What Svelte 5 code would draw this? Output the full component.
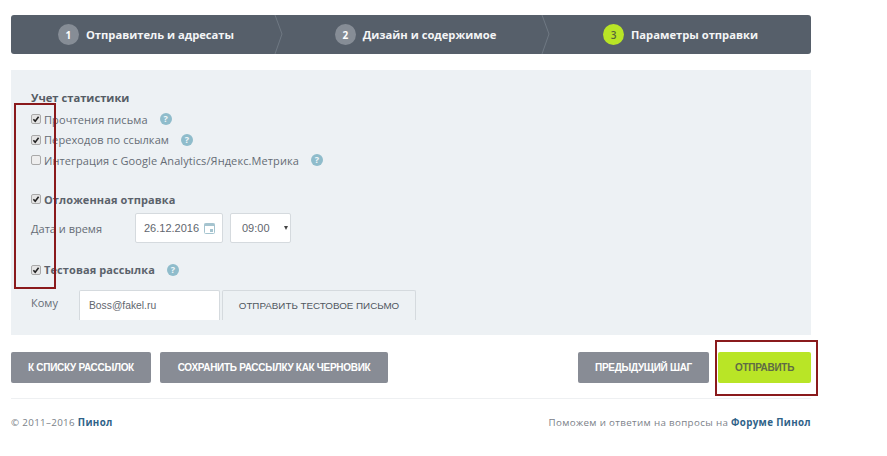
<script>
  const steps = [
    { n: 1, label: "Отправитель и адресаты" },
    { n: 2, label: "Дизайн и содержимое" },
    { n: 3, label: "Параметры отправки", active: true },
  ];
  const stats = [
    { label: "Прочтения письма", checked: true },
    { label: "Переходов по ссылкам", checked: true },
    { label: "Интеграция с Google Analytics/Яндекс.Метрика", checked: false },
  ];
</script>

{#snippet check(checked)}
  <svg class="check" width="10" height="10" viewBox="0 0 10 10">
    <rect x="0.5" y="0.5" width="9" height="9" rx="1.5" fill={checked ? "#e4e4e4" : "#eeeeee"} stroke="#a9a9a9" />
    {#if checked}
      <path d="M2.4 5.2 L4.2 7.2 L7.6 2.8" fill="none" stroke="#222" stroke-width="1.6" />
    {/if}
  </svg>
{/snippet}

{#snippet help()}
  <span class="help">?</span>
{/snippet}

<div class="page">
  <div class="steps">
    {#each steps as s, i}
      <div class="step">
        <span class="num" class:on={s.active}>{s.n}</span>
        <span class="step-label">{s.label}</span>
        {#if i < 2}
          <svg class="chev" width="10" height="39" viewBox="0 0 10 39">
            <path d="M1 0 L8 19 L1 39" fill="none" stroke="#6f7883" stroke-width="1" />
          </svg>
        {/if}
      </div>
    {/each}
  </div>

  <div class="panel">
    <h4>Учет статистики</h4>
    {#each stats as r}
      <label class="row">
        {@render check(r.checked)}
        <span>{r.label}</span>
        {@render help()}
      </label>
    {/each}

    <label class="row strong first">
      {@render check(true)}
      <span>Отложенная отправка</span>
    </label>
    <div class="date-row">
      <span class="field-name">Дата и время</span>
      <div class="input date">
        <span>26.12.2016</span>
        <svg width="11" height="12" viewBox="0 0 11 12">
          <rect x="0.5" y="1.5" width="10" height="10" rx="1" fill="none" stroke="#a5c4cf" />
          <rect x="0.5" y="1.5" width="10" height="2.5" fill="#a5c4cf" />
          <rect x="6" y="7" width="3" height="3" fill="#a5c4cf" />
        </svg>
      </div>
      <div class="input time">
        <span>09:00</span>
        <span class="caret"></span>
      </div>
    </div>

    <label class="row strong test">
      {@render check(true)}
      <span>Тестовая рассылка</span>
      {@render help()}
    </label>
    <div class="to-row">
      <span class="field-name to">Кому</span>
      <div class="input email">Boss@fakel.ru</div>
      <div class="send-test">ОТПРАВИТЬ ТЕСТОВОЕ ПИСЬМО</div>
    </div>
  </div>

  <div class="actions">
    <button class="btn list">К СПИСКУ РАССЫЛОК</button>
    <button class="btn draft">СОХРАНИТЬ РАССЫЛКУ КАК ЧЕРНОВИК</button>
    <span class="spacer"></span>
    <button class="btn prev">ПРЕДЫДУЩИЙ ШАГ</button>
    <button class="btn go">ОТПРАВИТЬ</button>
  </div>

  <footer>
    <span>© 2011–2016 <a href="#top">Пинол</a></span>
    <span class="ask">Поможем и ответим на вопросы на <a href="#top">Форуме Пинол</a></span>
  </footer>
</div>

<div class="mark left"></div>
<div class="mark right"></div>

<style>
  :global(body) {
    background: #fff;
  }

  .page {
    width: 800px;
    margin-left: 11px;
    padding-top: 15px;
    font-family: "Open Sans", sans-serif;
    color: #656c75;
  }

  .steps {
    display: grid;
    grid-template-columns: 267px 267px 266px;
    height: 39px;
    background: #565f6a;
    border-radius: 3px;
  }

  .step {
    position: relative;
    display: flex;
    align-items: center;
    justify-content: center;
    gap: 7px;
    padding-left: 3px;
    color: #f4f5f6;
    font-size: 11.2px;
    font-weight: 700;
  }

  .step:nth-child(2) {
    padding-left: 8px;
  }

  .step:nth-child(3) {
    padding-left: 5px;
  }

  .num {
    width: 21px;
    height: 21px;
    border-radius: 50%;
    background: #868d96;
    color: #fff;
    font-size: 10px;
    display: flex;
    align-items: center;
    justify-content: center;
  }

  .num.on {
    background: #b9e526;
    color: #56643a;
    font-weight: 600;
  }

  .chev {
    position: absolute;
    right: -6px;
    top: 0;
  }

  .panel {
    margin-top: 16px;
    height: 265px;
    box-sizing: border-box;
    background: #edf1f4;
    padding: 20px 20px 0;
    font-size: 11px;
  }

  h4 {
    margin: 0 0 3px;
    font-size: 11.2px;
    line-height: 16px;
    font-weight: 700;
    color: #555c65;
  }

  .row {
    display: flex;
    align-items: center;
    height: 20.5px;
    gap: 3px;
    letter-spacing: 0.1px;
  }

  .check {
    flex: none;
  }

  .help {
    width: 12px;
    height: 12px;
    margin-left: 9px;
    border-radius: 50%;
    background: #8fbccb;
    color: #f2f7f9;
    font-size: 9px;
    font-weight: 700;
    line-height: 12px;
    text-align: center;
  }

  .strong {
    font-weight: 700;
    color: #5b626b;
  }

  .first {
    margin-top: 18.5px;
  }

  .date-row {
    display: flex;
    align-items: center;
    margin-top: 3px;
    height: 30px;
  }

  .field-name {
    width: 104px;
    padding-top: 1px;
  }

  .input {
    box-sizing: border-box;
    background: #fff;
    border: 1px solid #d5dade;
    border-radius: 2px;
    font-family: "Liberation Sans", sans-serif;
    font-size: 11px;
    color: #5f666e;
    display: flex;
    align-items: center;
  }

  .date {
    width: 88px;
    height: 30px;
    padding-left: 8px;
    gap: 5px;
  }

  .time {
    width: 61px;
    height: 30px;
    margin-left: 7px;
    padding-left: 11px;
    gap: 14px;
  }

  .caret {
    width: 0;
    height: 0;
    border-left: 2px solid transparent;
    border-right: 2px solid transparent;
    border-top: 4px solid #444;
  }

  .test {
    margin-top: 16.75px;
  }

  .to-row {
    display: flex;
    align-items: flex-start;
    margin-top: 9.75px;
    height: 30px;
  }

  .to {
    width: 48px;
    line-height: 26px;
    padding-top: 0;
  }

  .email {
    width: 141px;
    height: 30px;
    padding-left: 9px;
    border-bottom: 0;
    border-radius: 2px 2px 0 0;
    font-size: 10.3px;
  }

  .send-test {
    box-sizing: border-box;
    width: 194px;
    height: 30px;
    margin-left: 2px;
    border: 1px solid #d5dade;
    border-bottom: 0;
    border-radius: 2px 2px 0 0;
    font-family: "Liberation Sans", sans-serif;
    font-size: 9.8px;
    color: #50575f;
    display: flex;
    align-items: center;
    justify-content: center;
  }

  .actions {
    display: flex;
    gap: 9px;
    margin-top: 17px;
    padding-bottom: 15px;
    border-bottom: 1px solid #eef0f2;
  }

  .spacer {
    flex: 1;
  }

  .btn {
    height: 31px;
    padding: 0;
    border: 0;
    border-radius: 2px;
    background: #888c95;
    color: #fff;
    font-family: "Liberation Sans", sans-serif;
    font-size: 10px;
    font-weight: 700;
    letter-spacing: -0.3px;
  }

  .list {
    width: 140px;
  }

  .draft {
    width: 228px;
  }

  .prev {
    width: 131px;
  }

  .btn.go {
    background: #b9e526;
    color: #5f6b45;
    width: 93px;
  }

  footer {
    display: flex;
    justify-content: space-between;
    margin-top: 16px;
    font-size: 9.75px;
    line-height: 16px;
    color: #7b8189;
    letter-spacing: 0.35px;
  }

  footer a {
    color: #2f6288;
    font-weight: 700;
    text-decoration: none;
  }

  .mark {
    position: absolute;
    box-sizing: border-box;
    border: 2px solid #8a1a1c;
  }

  .mark.left {
    left: 14px;
    top: 103px;
    width: 42px;
    height: 186px;
  }

  .mark.right {
    left: 715px;
    top: 340px;
    width: 103px;
    height: 56px;
  }
</style>
